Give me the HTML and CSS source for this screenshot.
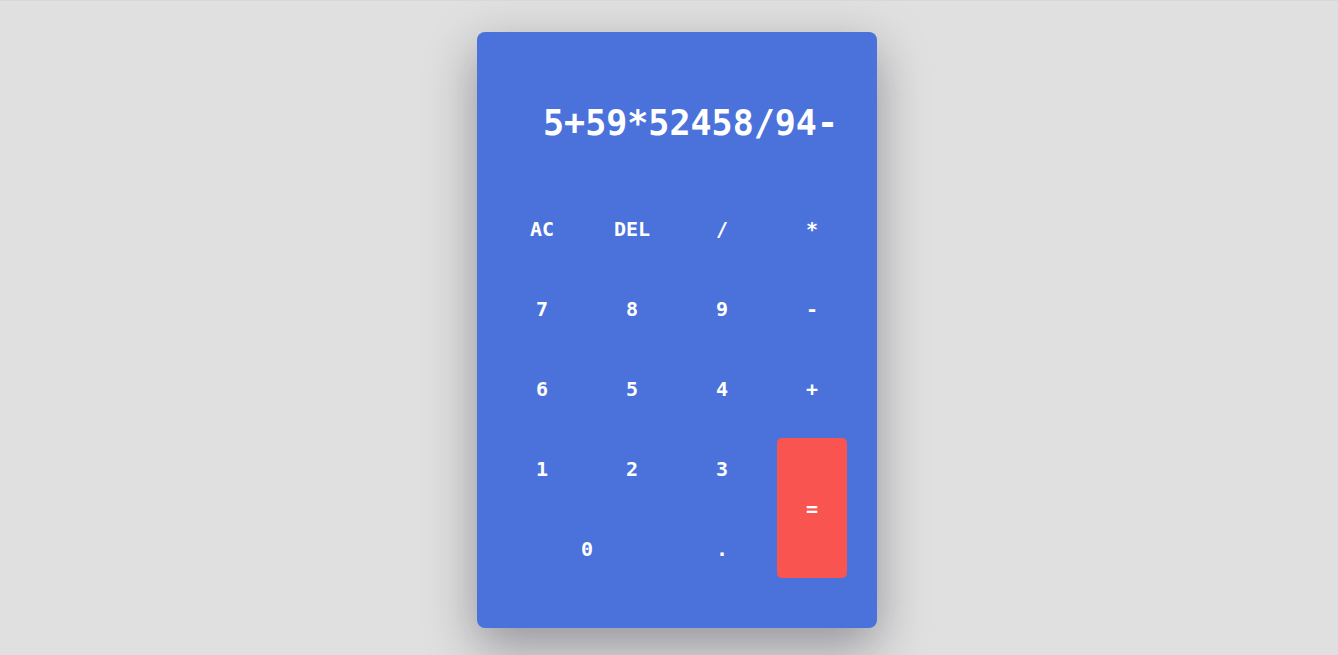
FILE: index.html
```html
<!DOCTYPE html>
<html lang="en">
<head>
<meta charset="utf-8">
<title>Calculator</title>
<link rel="stylesheet" href="styles.css">
</head>
<body>
<main class="page">
  <div class="calculator">
    <div class="display">5+59*52458/94-</div>
    <div class="keys">
      <button class="key">AC</button>
      <button class="key">DEL</button>
      <button class="key">/</button>
      <button class="key">*</button>
      <button class="key">7</button>
      <button class="key">8</button>
      <button class="key">9</button>
      <button class="key">-</button>
      <button class="key">6</button>
      <button class="key">5</button>
      <button class="key">4</button>
      <button class="key">+</button>
      <button class="key">1</button>
      <button class="key">2</button>
      <button class="key">3</button>
      <button class="key key-equals">=</button>
      <button class="key key-zero">0</button>
      <button class="key">.</button>
    </div>
  </div>
</main>
</body>
</html>
```
FILE: styles.css
```css
html, body {
  margin: 0;
  padding: 0;
}
body {
  background: #e0e0e0;
  border-top: 1px solid #d8d8d8;
  font-family: "DejaVu Sans Mono", "Liberation Mono", monospace;
  height: 654px;
  overflow: hidden;
}
.page {
  display: flex;
  justify-content: center;
  padding-top: 31px;
  padding-left: 16px;
}
.calculator {
  width: 400px;
  height: 596px;
  box-sizing: border-box;
  background: #4b72db;
  border-radius: 8px;
  box-shadow: 0 18px 50px rgba(20, 20, 40, 0.38);
  padding: 0 30px;
  display: flex;
  flex-direction: column;
}
.display {
  height: 166px;
  box-sizing: border-box;
  padding-top: 71px;
  padding-right: 9px;
  text-align: right;
  color: #ffffff;
  font-size: 35px;
  font-weight: bold;
  line-height: 40px;
  letter-spacing: 0;
}
.keys {
  display: grid;
  grid-template-columns: repeat(4, 70px);
  grid-auto-rows: 60px;
  column-gap: 20px;
  row-gap: 20px;
}
.key {
  border: none;
  background: transparent;
  color: #ffffff;
  font-family: inherit;
  font-size: 20px;
  font-weight: bold;
  padding: 2px 0 0 0;
  margin: 0;
  border-radius: 5px;
}
.key-equals {
  grid-column: 4;
  grid-row: 4 / span 2;
  background: #fa5450;
}
.key-zero {
  grid-column: 1 / span 2;
}
```
